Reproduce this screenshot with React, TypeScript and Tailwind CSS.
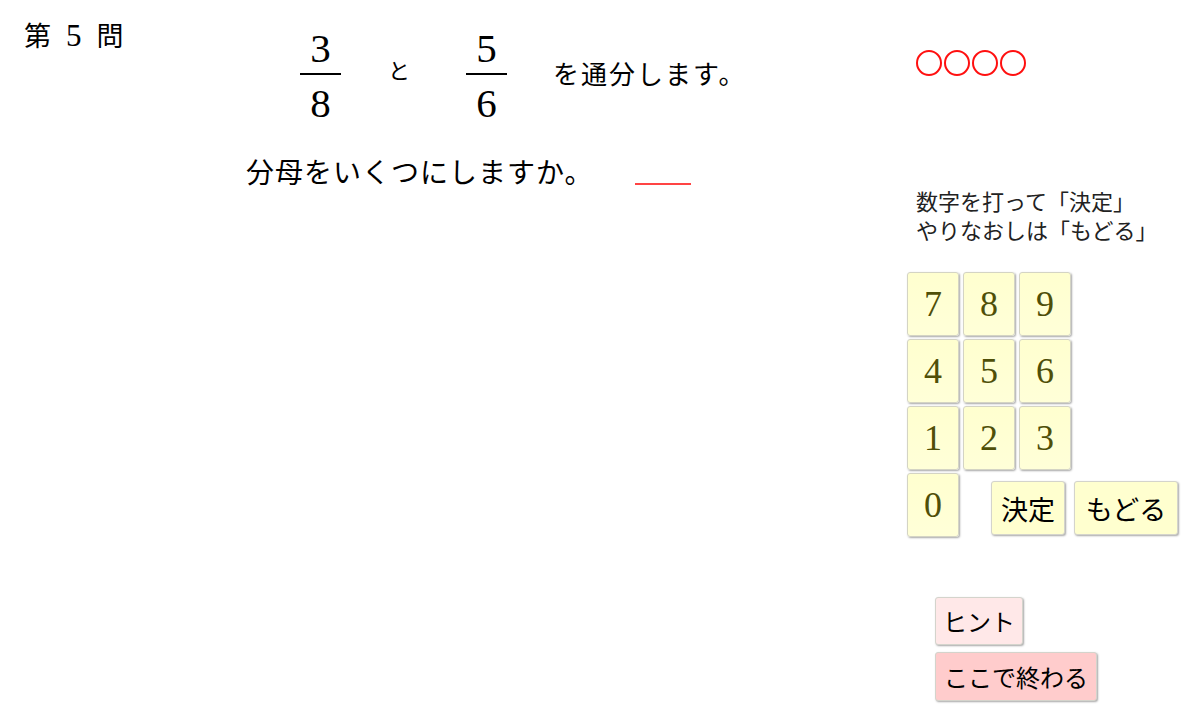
import React from "react"

const serif = "font-['Liberation_Serif','Noto_Sans_CJK_JP',serif]"
const sans = "font-['Noto_Sans_CJK_JP',sans-serif]"
const digitFont = "font-['Liberation_Serif',serif]"

function Fraction({ top, bottom }: { top: string; bottom: string }) {
  return (
    <div className="flex flex-col items-center">
      <div className={`h-[40px] text-[41px] leading-none text-black ${digitFont}`}>{top}</div>
      <div className="mt-[5px] h-[2px] w-[41px] bg-black" />
      <div className={`mt-[8px] h-[40px] text-[41px] leading-none text-black ${digitFont}`}>{bottom}</div>
    </div>
  )
}

function Key({ label }: { label: string }) {
  return (
    <button
      className={`flex h-[64px] w-[52px] items-center justify-center rounded-[3px] border border-[#d4d4c4] bg-gradient-to-b from-[#ffffcf] to-[#ffffd8] text-[36px] leading-none text-[#4f4f08] shadow-[1px_1px_2px_rgba(0,0,0,0.35)] ${digitFont}`}
    >
      {label}
    </button>
  )
}

function WordButton({ label, className }: { label: string; className: string }) {
  return (
    <button
      className={`flex items-center justify-center rounded-[3px] border border-[#d4d4cc] leading-none text-black shadow-[1px_1px_2px_rgba(0,0,0,0.35)] ${sans} ${className}`}
    >
      {label}
    </button>
  )
}

export default function App() {
  const keys = ["7", "8", "9", "4", "5", "6", "1", "2", "3"]

  return (
    <div className="flex h-[713px] w-[1200px] bg-white text-black">
      {/* question area */}
      <div className="flex w-[907px] flex-col">
        <div className="flex items-start">
          <div className={`flex w-[300px] items-baseline gap-[15px] pl-[24px] pt-[20px] text-[27px] leading-none ${serif}`}>
            <span>第</span>
            <span className={`text-[31px] ${digitFont}`}>5</span>
            <span>問</span>
          </div>
          <div className="pt-[28px]">
            <Fraction top="3" bottom="8" />
          </div>
          <div className={`ml-[47px] pt-[61px] text-[22px] leading-none ${serif}`}>と</div>
          <div className="ml-[56px] pt-[28px]">
            <Fraction top="5" bottom="6" />
          </div>
          <div className={`ml-[46px] pt-[63px] text-[26px] leading-none tracking-[2px] ${serif}`}>
            を通分します。
          </div>
        </div>

        <div className="mt-[37px] flex items-start pl-[246px]">
          <div className={`text-[28px] leading-none tracking-[1px] ${serif}`}>分母をいくつにしますか。</div>
          <div className="ml-[42px] mt-[23px] h-[2px] w-[56px] bg-[#ff4444]" />
        </div>
      </div>

      {/* answer panel */}
      <div className="flex flex-col">
        <div className="ml-[9px] mt-[50px] flex gap-[2px]">
          {[0, 1, 2, 3].map((i) => (
            <div key={i} className="h-[26px] w-[26px] rounded-full border-2 border-[#ff1010]" />
          ))}
        </div>

        <div className={`ml-[9px] mt-[112px] text-[22px] leading-[29px] text-[#222] ${serif}`}>
          <div>数字を打って「決定」</div>
          <div>やりなおしは「もどる」</div>
        </div>

        <div className="mt-[26px] grid w-[164px] grid-cols-3 gap-x-[4px] gap-y-[3px]">
          {keys.map((k) => (
            <Key key={k} label={k} />
          ))}
        </div>
        <div className="mt-[3px] flex items-start">
          <Key label="0" />
          <WordButton
            label="決定"
            className="ml-[32px] mt-[8px] h-[54px] w-[74px] bg-[#ffffcf] text-[27px]"
          />
          <WordButton
            label="もどる"
            className="ml-[9px] mt-[8px] h-[54px] w-[104px] bg-[#ffffcf] text-[27px]"
          />
        </div>

        <div className="ml-[28px] mt-[60px] flex flex-col items-start gap-[7px]">
          <WordButton label="ヒント" className="h-[48px] w-[88px] bg-[#ffe8e8] text-[24px]" />
          <WordButton label="ここで終わる" className="h-[49px] w-[162px] bg-[#ffcccc] text-[24px]" />
        </div>
      </div>
    </div>
  )
}
